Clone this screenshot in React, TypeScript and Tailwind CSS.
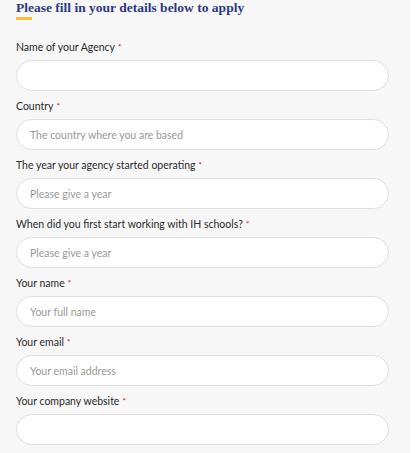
import React from "react";

const fields: { label: string; placeholder: string }[] = [
  { label: "Name of your Agency", placeholder: "" },
  { label: "Country", placeholder: "The country where you are based" },
  { label: "The year your agency started operating", placeholder: "Please give a year" },
  { label: "When did you first start working with IH schools?", placeholder: "Please give a year" },
  { label: "Your name", placeholder: "Your full name" },
  { label: "Your email", placeholder: "Your email address" },
  { label: "Your company website", placeholder: "" },
];

export default function App() {
  return (
    <div className="flex w-[415px] h-[453px] overflow-hidden bg-white">
      <div className="w-[410px] h-full bg-[#f7f7f7] px-4" style={{ fontFamily: "Lato, 'Open Sans', sans-serif" }}>
        <h2
          className="text-[13.5px] leading-[16px] font-bold text-[#2c3a86] pt-0 whitespace-nowrap"
          style={{ fontFamily: "'Liberation Serif', serif" }}
        >
          Please fill in your details below to apply
        </h2>
        <div className="w-4 h-[3px] bg-[#fbbf3a] mt-[1px] mb-[19px]" />
        {fields.map((f, i) => (
          <div key={i} className="mb-[7px]">
            <label className="block text-[10.5px] leading-[16px] text-[#2a2a2a] mb-[5px] whitespace-nowrap">
              {f.label}
              <span className="text-[#d0021b] text-[8px] align-top ml-[3px]">*</span>
            </label>
            <input
              className="block w-[373px] h-[31px] rounded-full bg-white border border-[#e0e0e0] px-[13px] text-[10.5px] text-[#333] placeholder:text-[#999] outline-none"
              placeholder={f.placeholder}
            />
          </div>
        ))}
      </div>
    </div>
  );
}
